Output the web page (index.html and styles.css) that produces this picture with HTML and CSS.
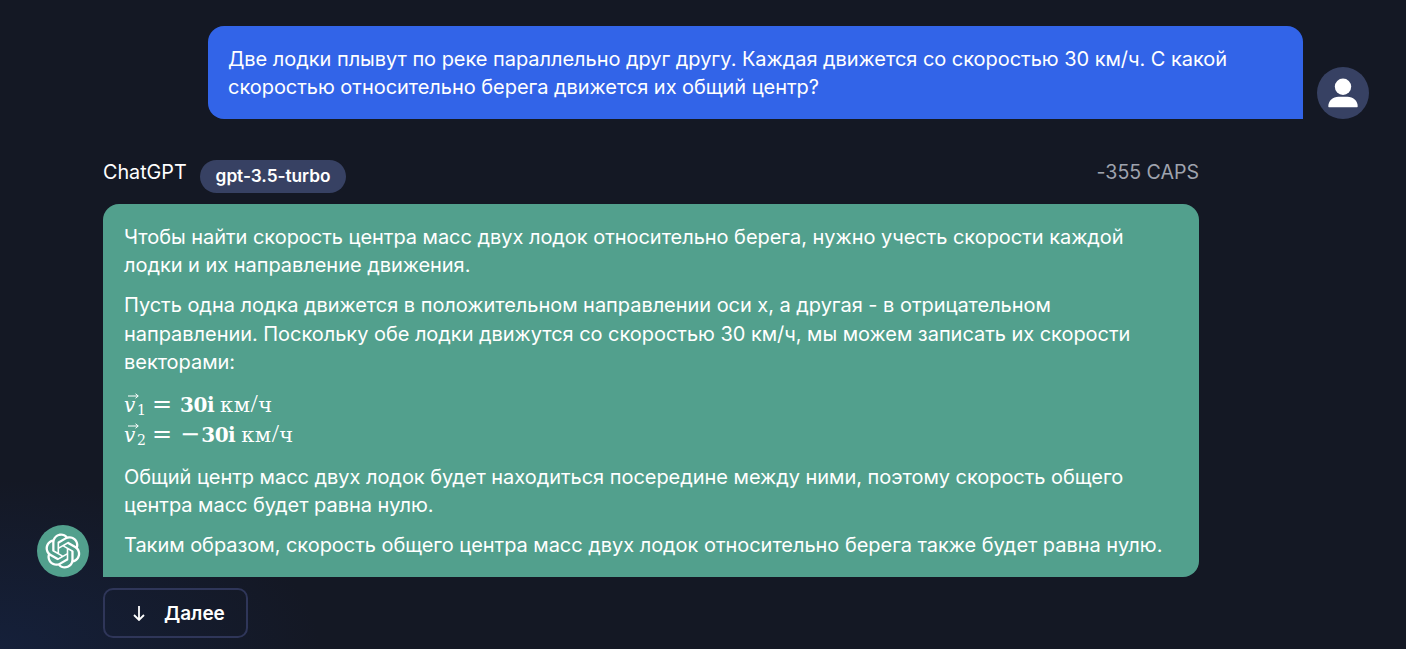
FILE: index.html
```html
<!DOCTYPE html>
<html lang="ru">
<head>
<meta charset="utf-8">
<title>ChatGPT</title>
<link rel="stylesheet" href="styles.css">
</head>
<body>
<main class="chat">
  <section class="user-row">
    <div class="user-bubble">Две лодки плывут по реке параллельно друг другу. Каждая движется со скоростью 30 км/ч. С какой скоростью относительно берега движется их общий центр?</div>
    <div class="avatar avatar-user">
      <svg viewBox="0 0 52 52" width="52" height="52"><circle cx="26" cy="19.800" r="8.200" fill="#fff"/><path d="M11.300 39.300C11.300 33.500 16 29.700 21.500 29.700h9c5.500 0 10.200 3.800 10.200 9.600 0 .7-.3 1-1 1H12.300c-.7 0-1-.3-1-1z" fill="#fff"/></svg>
    </div>
  </section>
  <section class="bot-row">
    <div class="avatar avatar-bot">
      <svg viewBox="0 0 41 41" width="36" height="36"><path fill="#fff" d="M37.5324 16.8707C37.9808 15.5241 38.1363 14.0974 37.9886 12.6859C37.8409 11.2744 37.3934 9.91076 36.676 8.68622C35.6126 6.83404 33.9882 5.3676 32.0373 4.4985C30.0864 3.62941 27.9098 3.40259 25.8215 3.85078C24.8796 2.7893 23.7219 1.94125 22.4257 1.36341C21.1295 0.785575 19.7249 0.491269 18.3058 0.500197C16.1708 0.495044 14.0893 1.16803 12.3614 2.42214C10.6335 3.67624 9.34853 5.44666 8.6917 7.47815C7.30085 7.76286 5.98686 8.3414 4.8377 9.17505C3.68854 10.0087 2.73073 11.0782 2.02839 12.312C0.956464 14.1591 0.498905 16.2988 0.721698 18.4228C0.944492 20.5467 1.83612 22.5449 3.268 24.1293C2.81966 25.4759 2.66413 26.9026 2.81182 28.3141C2.95951 29.7256 3.40701 31.0892 4.12437 32.3138C5.18791 34.1659 6.8123 35.6322 8.76321 36.5013C10.7141 37.3704 12.8907 37.5973 14.9789 37.1492C15.9208 38.2107 17.0786 39.0587 18.3747 39.6366C19.6709 40.2144 21.0755 40.5087 22.4946 40.4998C24.6307 40.5054 26.7133 39.8321 28.4418 38.5772C30.1704 37.3223 31.4556 35.5506 32.1119 33.5179C33.5027 33.2332 34.8167 32.6547 35.9659 31.821C37.115 30.9874 38.0728 29.9178 38.7752 28.684C39.8458 26.8371 40.3023 24.6979 40.0789 22.5748C39.8556 20.4517 38.9639 18.4544 37.5324 16.8707ZM22.4978 37.8849C20.7443 37.8874 19.0459 37.2733 17.6994 36.1501C17.7601 36.117 17.8666 36.0586 17.936 36.0161L25.9004 31.4156C26.1003 31.3019 26.2663 31.137 26.3813 30.9378C26.4964 30.7386 26.5563 30.5124 26.5549 30.2825V19.0542L29.9213 20.998C29.9389 21.0068 29.9541 21.0198 29.9656 21.0359C29.977 21.052 29.9842 21.0707 29.9867 21.0902V30.3889C29.9842 32.375 29.1946 34.2791 27.7909 35.6841C26.3872 37.0892 24.4838 37.8806 22.4978 37.8849ZM6.39227 31.0064C5.51397 29.4888 5.19742 27.7107 5.49804 25.9832C5.55718 26.0187 5.66048 26.0818 5.73461 26.1244L13.699 30.7248C13.8975 30.8408 14.1233 30.902 14.3532 30.902C14.583 30.902 14.8088 30.8408 15.0073 30.7248L24.731 25.1103V28.9979C24.7321 29.0177 24.7283 29.0376 24.7199 29.0556C24.7115 29.0736 24.6988 29.0893 24.6829 29.1012L16.6317 33.7497C14.9096 34.7416 12.8643 35.0097 10.9447 34.4954C9.02506 33.9811 7.38785 32.7263 6.39227 31.0064ZM4.29707 13.6194C5.17156 12.0998 6.55279 10.9364 8.19885 10.3327C8.19885 10.4013 8.19491 10.5228 8.19491 10.6071V19.808C8.19351 20.0378 8.25334 20.2638 8.36823 20.4629C8.48312 20.6619 8.64893 20.8267 8.84863 20.9404L18.5723 26.5542L15.206 28.4979C15.1894 28.5089 15.1703 28.5155 15.1505 28.5173C15.1307 28.5191 15.1107 28.516 15.0924 28.5082L7.04046 23.8557C5.32135 22.8601 4.06716 21.2235 3.55289 19.3046C3.03862 17.3858 3.30624 15.3413 4.29707 13.6194ZM31.955 20.0556L22.2312 14.4411L25.5976 12.4981C25.6142 12.4872 25.6333 12.4805 25.6531 12.4787C25.6729 12.4769 25.6928 12.4801 25.7111 12.4879L33.7631 17.1364C34.9967 17.849 36.0017 18.8982 36.6606 20.1613C37.3194 21.4244 37.6047 22.849 37.4832 24.2684C37.3617 25.6878 36.8382 27.0432 35.9743 28.1759C35.1103 29.3086 33.9415 30.1717 32.6047 30.6641C32.6047 30.5947 32.6047 30.4733 32.6047 30.3889V21.188C32.6066 20.9586 32.5474 20.7328 32.4332 20.5338C32.319 20.3348 32.154 20.1698 31.955 20.0556ZM35.3055 15.0128C35.2464 14.9765 35.1431 14.9142 35.069 14.8717L27.1045 10.2712C26.906 10.1554 26.6803 10.0943 26.4504 10.0943C26.2206 10.0943 25.9948 10.1554 25.7963 10.2712L16.0726 15.8858V11.9982C16.0715 11.9783 16.0753 11.9585 16.0837 11.9405C16.0921 11.9225 16.1048 11.9068 16.1207 11.8949L24.1719 7.25025C25.4053 6.53903 26.8158 6.19376 28.2383 6.25482C29.6608 6.31589 31.0364 6.78077 32.2044 7.59508C33.3723 8.40939 34.2842 9.53945 34.8334 10.8531C35.3826 12.1667 35.5464 13.6095 35.3055 15.0128ZM14.2424 21.9419L10.8752 19.9981C10.8576 19.9893 10.8423 19.9763 10.8309 19.9602C10.8195 19.9441 10.8122 19.9254 10.8098 19.9058V10.6071C10.8107 9.18295 11.2173 7.78848 11.9819 6.58696C12.7466 5.38544 13.8377 4.42659 15.1275 3.82264C16.4173 3.21869 17.8524 2.99464 19.2649 3.1767C20.6775 3.35876 22.0089 3.93941 23.1034 4.85067C23.0427 4.88379 22.937 4.94215 22.8668 4.98473L14.9024 9.58517C14.7025 9.69878 14.5366 9.86356 14.4215 10.0626C14.3065 10.2616 14.2466 10.4877 14.2479 10.7175L14.2424 21.9419ZM16.071 17.9991L20.4018 15.4978L24.7325 17.9975V22.9985L20.4018 25.4983L16.071 22.9985V17.9991Z"/></svg>
    </div>
    <div class="bot-main">
      <header class="bot-head">
        <div class="bot-id"><span class="bot-name">ChatGPT</span><span class="model-pill">gpt-3.5-turbo</span></div>
        <span class="caps">-355 CAPS</span>
      </header>
      <div class="bot-bubble">
        <p>Чтобы найти скорость центра масс двух лодок относительно берега, нужно учесть скорости каждой лодки и их направление движения.</p>
        <p>Пусть одна лодка движется в положительном направлении оси x, а другая - в отрицательном направлении. Поскольку обе лодки движутся со скоростью 30 км/ч, мы можем записать их скорости векторами:</p>
        <div class="math">
          <div class="math-line"><span class="vec">v<svg class="arrow" viewBox="0 0 11 6" width="11" height="6"><path d="M0 3h10M7.500 .8 10.300 3 7.500 5.200" fill="none" stroke="#fff" stroke-width="1"/></svg></span><sub>1</sub><span class="eq">=</span><b>30i</b><span class="unit">км<span class="slash">/</span>ч</span></div>
          <div class="math-line"><span class="vec">v<svg class="arrow" viewBox="0 0 11 6" width="11" height="6"><path d="M0 3h10M7.500 .8 10.300 3 7.500 5.200" fill="none" stroke="#fff" stroke-width="1"/></svg></span><sub>2</sub><span class="eq">=</span><span class="minus">−</span><b>30i</b><span class="unit">км<span class="slash">/</span>ч</span></div>
        </div>
        <p>Общий центр масс двух лодок будет находиться посередине между ними, поэтому скорость общего центра масс будет равна нулю.</p>
        <p class="last">Таким образом, скорость общего центра масс двух лодок относительно берега также будет равна нулю.</p>
      </div>
      <button class="next-btn" type="button">
        <svg viewBox="0 0 12 16" width="12" height="16"><path d="M6 1v14M1 10l5 5 5-5" fill="none" stroke="#fff" stroke-width="1.800"/></svg>
        <span>Далее</span>
      </button>
    </div>
  </section>
</main>
</body>
</html>
```
FILE: styles.css
```css
* { box-sizing: border-box; }
html, body { margin: 0; height: 100%; }
body {
  background: radial-gradient(ellipse 320px 170px at 0 100%, #15203a 0%, rgba(21,32,58,0) 100%), #141824;
  color: #fff;
  font-family: Inter, "Liberation Sans", sans-serif;
  font-size: 20px;
  line-height: 28.200px;
  letter-spacing: -0.040px;
  overflow: hidden;
}
.chat { display: flex; flex-direction: column; padding: 26px 37px 0; gap: 41px; }
.user-row { display: flex; justify-content: flex-end; align-items: flex-end; gap: 14px; }
.user-bubble {
  width: 1095px;
  height: 93px;
  padding: 19px 20px 0;
  background: #3264e8;
  border-radius: 16px 16px 0 16px;
}
.avatar { flex: none; width: 52px; height: 52px; border-radius: 50%; display: flex; align-items: center; justify-content: center; }
.avatar-user { background: #374163; }
.avatar-bot { background: #52a08d; }
.bot-row { display: flex; align-items: flex-start; gap: 14px; }
.bot-row .avatar-bot { align-self: flex-start; margin-top: 365px; }
.bot-main { width: 1096px; }
.bot-head { display: flex; justify-content: space-between; align-items: flex-start; height: 33px; margin-bottom: 11px; }
.bot-id { display: flex; align-items: flex-start; gap: 13.500px; }
.bot-name { font-size: 19.800px; line-height: 25px; }
.model-pill { background: #374163; border-radius: 17px; height: 33px; padding: 0 15.500px; font-size: 17.300px; font-weight: 600; display: flex; align-items: center; }
.caps { font-size: 19.600px; line-height: 25px; color: #9fa3ae; }
.bot-bubble { background: #52a08d; border-radius: 16px 16px 16px 0; padding: 19px 21px 0; height: 373px; }
.bot-bubble p { margin: 0 0 12px; }
.bot-bubble p.last { margin: 0; }
.math { margin: 14px 0 13px; font-family: "DejaVu Serif", serif; font-size: 20px; line-height: 30px; letter-spacing: 0; }
.math-line { display: flex; align-items: baseline; height: 30px; }
.vec { font-style: italic; position: relative; width: 13px; }
.arrow { position: absolute; left: 4px; top: 3px; }
.math sub { font-size: 14px; line-height: 0; position: relative; top: 3px; vertical-align: baseline; width: 8px; }
.eq { margin: 0 8px 0 7px; font-size: 24px; line-height: 0; }
.minus { margin-right: 1px; font-size: 24px; line-height: 0; }
.math b { font-weight: 700; letter-spacing: -0.500px; }
.unit { margin-left: 6px; font-size: 21px; letter-spacing: 0.500px; }
.slash { font-size: 26px; line-height: 0; font-family: "Liberation Serif", serif; }
.next-btn {
  display: flex; align-items: center; gap: 19px;
  margin-top: 11px; width: 145px; height: 50px; padding: 0 0 0 28px;
  background: transparent; border: 2px solid #2f3659; border-radius: 10px;
  color: #fff; font: 600 19px Inter, sans-serif;
}
```
